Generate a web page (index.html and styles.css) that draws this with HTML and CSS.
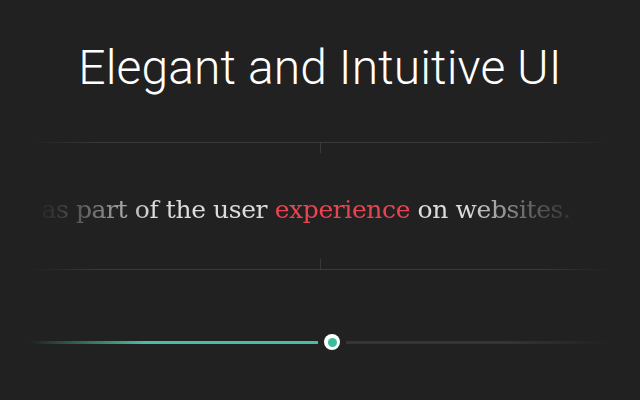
FILE: index.html
```html
<!DOCTYPE html>
<html>
<head>
<meta charset="utf-8">
<link rel="stylesheet" href="styles.css">
</head>
<body>
<main class="page">
  <h1 class="title">Elegant and Intuitive UI</h1>
  <section class="ticker">
    <div class="rule"></div>
    <div class="ticker-body">
      <p class="sentence">as part of the user <span class="accent">experience</span> on websites.</p>
    </div>
    <div class="rule"></div>
  </section>
  <div class="slider">
    <div class="fill"></div>
    <div class="knob"><div class="knob-dot"></div></div>
    <div class="rest"></div>
  </div>
</main>
</body>
</html>
```
FILE: styles.css
```css
html, body {
  margin: 0;
  padding: 0;
  background: #212121;
}
.page {
  width: 640px;
  height: 400px;
  overflow: hidden;
  display: flex;
  flex-direction: column;
  align-items: center;
}
.title {
  margin: 44px 0 0 0;
  font-family: Roboto, "Liberation Sans", sans-serif;
  font-weight: 300;
  font-size: 48px;
  line-height: 48px;
  color: #ffffff;
  letter-spacing: 0.1px;
}
.ticker {
  position: relative;
  margin-top: 50px;
  width: 640px;
  display: flex;
  flex-direction: column;
}
.rule {
  height: 1px;
  margin: 0 30px;
  background: linear-gradient(to right, rgba(60,60,60,0) 0%, #3a3a3a 12%, #3a3a3a 88%, rgba(60,60,60,0) 100%);
}
.ticker-body {
  position: relative;
  height: 126px;
  display: flex;
  align-items: center;
  justify-content: center;
  padding-right: 28px;
  -webkit-mask-image: linear-gradient(to right, transparent 5%, rgba(0,0,0,0.12) 9%, rgba(0,0,0,0.45) 15%, #000 24%, #000 73%, rgba(0,0,0,0.4) 82%, rgba(0,0,0,0.1) 89%, transparent 93%);
  mask-image: linear-gradient(to right, transparent 5%, rgba(0,0,0,0.12) 9%, rgba(0,0,0,0.45) 15%, #000 24%, #000 73%, rgba(0,0,0,0.4) 82%, rgba(0,0,0,0.1) 89%, transparent 93%);
}
.ticker-body::before, .ticker-body::after {
  content: "";
  position: absolute;
  left: 320px;
  width: 1px;
  height: 10px;
  background: #3a3a3a;
}
.ticker-body::before { top: 0; }
.ticker-body::after { bottom: 0; }
.sentence {
  margin: 0;
  padding-top: 6px;
  font-family: "DejaVu Serif", serif;
  font-size: 25px;
  color: #dcdcdc;
  white-space: nowrap;
  letter-spacing: -0.4px;
}
.accent {
  color: #e84452;
}
.slider {
  margin-top: 64px;
  width: 580px;
  display: flex;
  align-items: center;
}
.fill {
  width: 288px;
  height: 3px;
  background: linear-gradient(to right, rgba(72,190,160,0) 0%, #48bea0 40%, #48bea0 100%);
}
.knob {
  margin: 0 6px;
  width: 16px;
  height: 16px;
  border-radius: 50%;
  background: #ffffff;
  display: flex;
  align-items: center;
  justify-content: center;
}
.knob-dot {
  width: 9px;
  height: 9px;
  border-radius: 50%;
  background: #3cbb9d;
}
.rest {
  flex: 1;
  height: 3px;
  background: linear-gradient(to right, #353535 0%, #353535 60%, rgba(53,53,53,0) 100%);
}
```
